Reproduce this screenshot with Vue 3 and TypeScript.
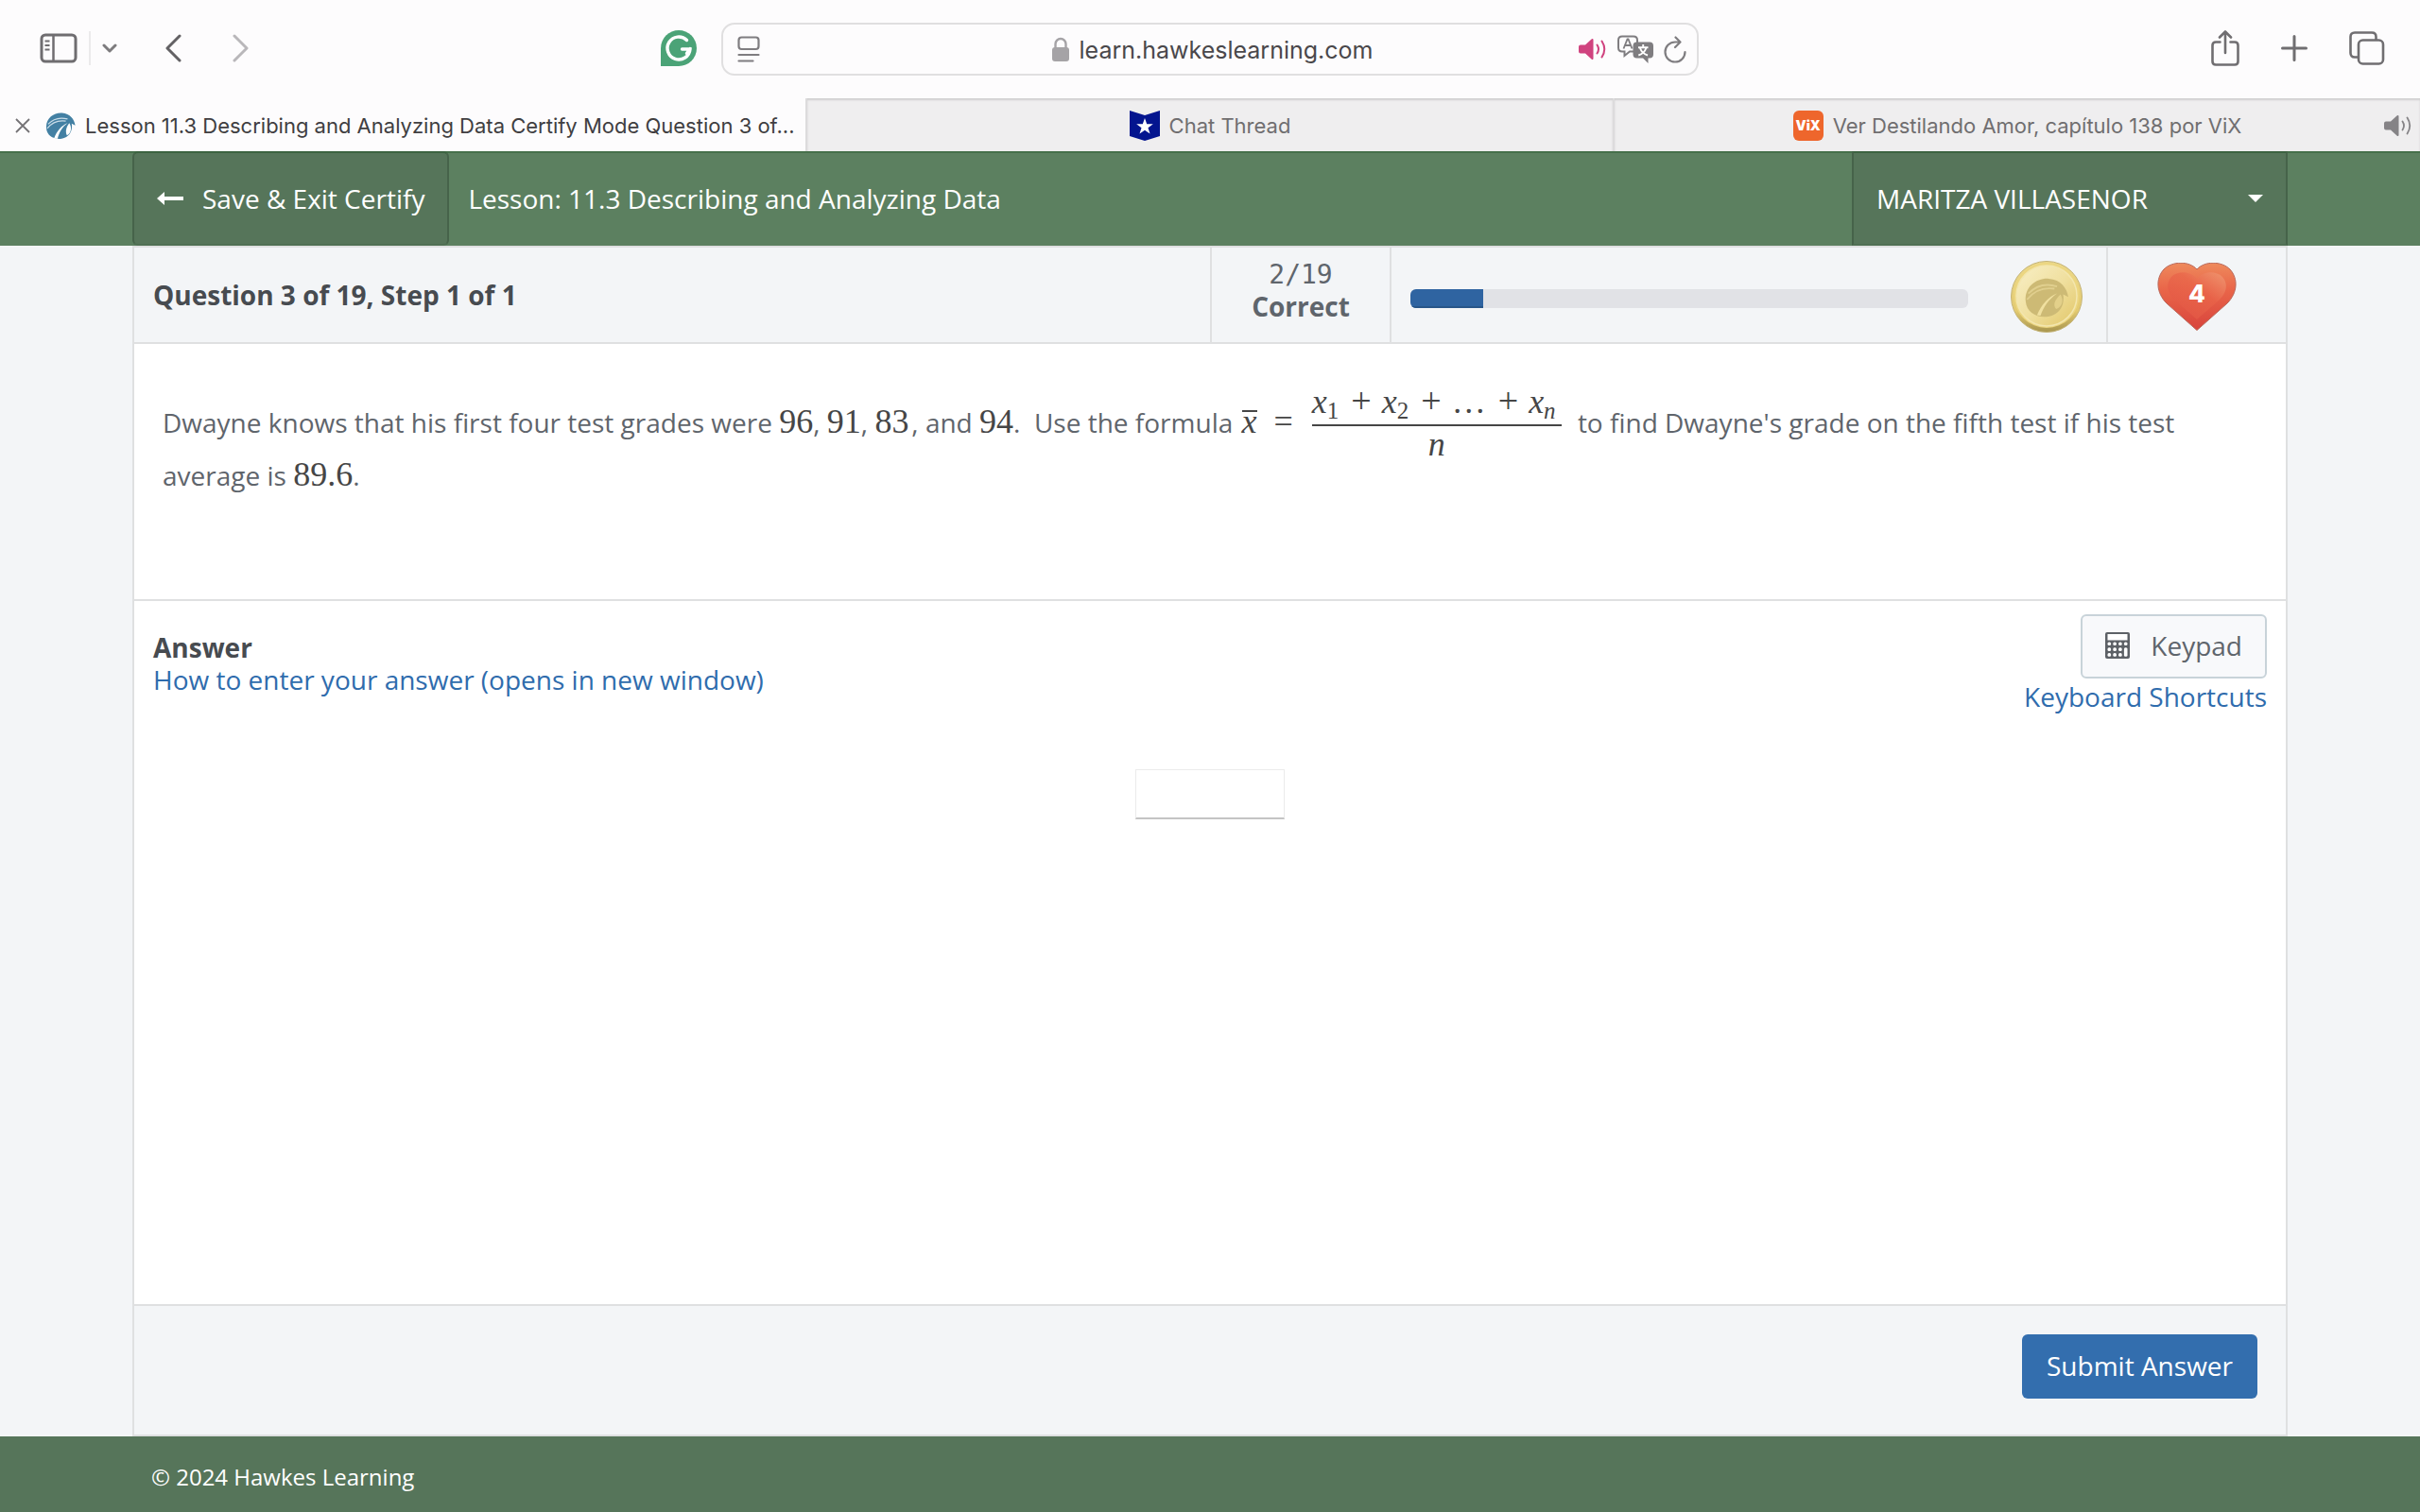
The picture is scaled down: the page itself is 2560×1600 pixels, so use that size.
<script setup lang="ts">
import { ref } from 'vue'

const address = ref('learn.hawkeslearning.com')
const answer = ref('')
const progress = ref(13)
const terms: string[] = ['1', '2']
</script>

<template>
  <div class="window">
    <header class="toolbar">
      <div class="tools tools-left">
        <button class="icon-btn" aria-label="Show sidebar">
          <svg width="40" height="32" viewBox="0 0 40 32" fill="none" stroke="#6f6d70" stroke-width="3">
            <rect x="2" y="2" width="36" height="28" rx="4" />
            <path d="M14.500 2v28" stroke-width="2.500" />
            <path d="M5.500 8.500h5M5.500 13h5M5.500 17.500h5" stroke-width="2" />
          </svg>
        </button>
        <span class="divider"></span>
        <button class="icon-btn menu" aria-label="Sidebar menu">
          <svg width="16" height="10" viewBox="0 0 16 10" fill="none" stroke="#7d7b7e" stroke-width="3" stroke-linecap="round" stroke-linejoin="round"><path d="M2 2l6 6 6-6" /></svg>
        </button>
        <button class="icon-btn back" aria-label="Back">
          <svg width="18" height="30" viewBox="0 0 18 30" fill="none" stroke="#636164" stroke-width="3" stroke-linecap="round" stroke-linejoin="round"><path d="M16 2L3 15l13 13" /></svg>
        </button>
        <button class="icon-btn" aria-label="Forward">
          <svg width="18" height="30" viewBox="0 0 18 30" fill="none" stroke="#b9b7ba" stroke-width="3" stroke-linecap="round" stroke-linejoin="round"><path d="M2 2l13 13L2 28" /></svg>
        </button>
        <button class="icon-btn grammar" aria-label="Grammar check">
          <svg width="38" height="38" viewBox="0 0 38 38">
            <path d="M19 0a19 19 0 0 1 0 38H0V19A19 19 0 0 1 19 0z" fill="#4ba377" />
            <path d="M27.500 10.500A12 12 0 1 0 31 20h-8.500M31 19.500l-3.500 5" fill="none" stroke="#fff" stroke-width="3.400" stroke-linecap="round" />
          </svg>
        </button>
      </div>

      <div class="url">
        <button class="icon-btn" aria-label="Page menu">
          <svg width="24" height="28" viewBox="0 0 24 28" fill="none" stroke="#7f7d80" stroke-width="2.200" stroke-linecap="round">
            <rect x="1.500" y="1.500" width="21" height="12.500" rx="3" /><path d="M1.500 20h21M1.500 26.500h15" />
          </svg>
        </button>
        <div class="address">
          <svg width="20" height="26" viewBox="0 0 20 26"><rect x="1" y="11" width="18" height="15" rx="3" fill="#a5a3a6" /><path d="M4.500 12V7.500a5.500 5.500 0 0 1 11 0V12" fill="none" stroke="#a5a3a6" stroke-width="2.400" /></svg>
          <input v-model="address" type="text" aria-label="Address" />
        </div>
        <div class="url-actions">
          <button class="icon-btn" aria-label="Mute">
            <svg width="30" height="24" viewBox="0 0 30 24"><path d="M2 7.500h5l6.500-6c1-1 2-.5 2 .8v19.400c0 1.300-1 1.800-2 .8L7 16.500H2q-2 0-2-2v-5q0-2 2-2z" fill="#d0437f" /><path d="M19.500 7.500q3 4.500 0 9M24.500 3.500q5.500 8.500 0 17" fill="none" stroke="#d0437f" stroke-width="2" stroke-linecap="round" /></svg>
          </button>
          <button class="icon-btn" aria-label="Translate">
            <svg width="38" height="30" viewBox="0 0 38 30">
              <path d="M17 17.500h-4L7.500 22v-4.500H5q-4 0-4-4v-8q0-4 4-4h12q4 0 4 4V8" fill="none" stroke="#7f7d80" stroke-width="2" />
              <path d="M6.500 14.500L10.500 4.500h1l4 10M8 11h6" fill="none" stroke="#7f7d80" stroke-width="1.800" />
              <path d="M20.500 7.500H34q4 0 4 4v9q0 4-4 4h-1.500V30L27 24.500h-6.500q-4 0-4-4v-9q0-4 4-4z" fill="#7f7d80" />
              <path d="M27.200 10v3M22 13.200h10.500M23.800 13.500q2 6 8.200 8M30.500 13.500q-2 6-8.200 8" fill="none" stroke="#fff" stroke-width="1.900" />
            </svg>
          </button>
          <button class="icon-btn" aria-label="Reload">
            <svg width="24" height="29" viewBox="0 0 24 29" fill="none" stroke="#7f7d80" stroke-width="2.200" stroke-linecap="round" stroke-linejoin="round"><path d="M22.500 17A10.500 10.500 0 1 1 12 6.500h5M12.500 1.500l5 5-5.500 5.500" /></svg>
          </button>
        </div>
      </div>

      <div class="tools tools-right">
        <button class="icon-btn" aria-label="Share">
          <svg width="30" height="38" viewBox="0 0 30 38" fill="none" stroke="#706e71" stroke-width="2.600" stroke-linecap="round" stroke-linejoin="round"><path d="M9.500 12.500H5q-3.500 0-3.500 3.500v17q0 3.500 3.500 3.500h20q3.500 0 3.500-3.500V16q0-3.500-3.500-3.500h-4.500M15 24V2M9 7.500L15 1.500l6 6" /></svg>
        </button>
        <button class="icon-btn" aria-label="New tab">
          <svg width="28" height="28" viewBox="0 0 28 28" stroke="#706e71" stroke-width="3" stroke-linecap="round"><path d="M14 1.500v25M1.500 14h25" /></svg>
        </button>
        <button class="icon-btn" aria-label="Tab overview">
          <svg width="38" height="36" viewBox="0 0 38 36" fill="none" stroke="#706e71" stroke-width="2.600"><rect x="10" y="9.500" width="26" height="25" rx="4.500" /><path d="M10 27.500H6q-4.500 0-4.500-4.500V6Q1.500 1.500 6 1.500h18Q28.500 1.500 28.500 6v3.500" /></svg>
        </button>
      </div>
    </header>

    <nav class="tabs" aria-label="Open tabs">
      <div class="tab active">
        <button class="icon-btn slot close" aria-label="Close tab">
          <svg width="16" height="16" viewBox="0 0 16 16" stroke="#757376" stroke-width="1.800"><path d="M1 1l14 14M15 1L1 15" /></svg>
        </button>
        <span class="tab-title">
          <svg width="32" height="28" viewBox="0 0 100 90">
            <path d="M2 55C-2 20 28 0 55 2c28 2 42 22 45 42l-12-6c4 22-6 46-34 51C28 93 4 80 2 55z" fill="#4380a3" />
            <path d="M8 40C26 20 50 16 74 22M5 54C22 32 46 26 68 29" fill="none" stroke="#c9dce8" stroke-width="4" />
            <path d="M74 36C54 44 38 62 28 88l12 1c6-22 14-38 34-53z" fill="#fff" />
            <path d="M80 36c-12 16-14 30-8 42 14-8 18-26 8-42z" fill="#fff" />
          </svg>
          <span>Lesson 11.3 Describing and Analyzing Data Certify Mode Question 3 of...</span>
        </span>
      </div>
      <div class="tab">
        <span class="tab-title">
          <svg width="32" height="32" viewBox="0 0 32 32"><path d="M0 0l16 5L32 0v27l-16 5-16-5z" fill="#04158f" /><path d="M16 8l2.200 6.200h6.600l-5.300 4 2 6.300L16 20.700l-5.500 3.800 2-6.300-5.300-4h6.600z" fill="#fff" /></svg>
          <span>Chat Thread</span>
        </span>
      </div>
      <div class="tab">
        <span class="slot"></span>
        <span class="tab-title">
          <span class="vix">ViX</span>
          <span>Ver Destilando Amor, capítulo 138 por ViX</span>
        </span>
        <button class="icon-btn slot" aria-label="Mute tab">
          <svg width="30" height="24" viewBox="0 0 30 24"><path d="M2 7.500h5l6.500-6c1-1 2-.5 2 .8v19.400c0 1.300-1 1.800-2 .8L7 16.500H2q-2 0-2-2v-5q0-2 2-2z" fill="#858386" /><path d="M19.500 7.500q3 4.500 0 9M24.500 3.500q5.500 8.500 0 17" fill="none" stroke="#858386" stroke-width="1.800" stroke-linecap="round" /></svg>
        </button>
      </div>
    </nav>

    <div class="banner">
      <div class="banner-inner">
        <button class="save">
          <svg width="28" height="14" viewBox="0 0 28 14" fill="#fff"><path d="M8 0v5h20v4H8v5L0 7z" /></svg>
          Save &amp; Exit Certify
        </button>
        <h1>Lesson: 11.3 Describing and Analyzing Data</h1>
        <button class="user">
          MARITZA VILLASENOR
          <svg width="16" height="8" viewBox="0 0 16 8" fill="#fff"><path d="M0 0h16L8 8z" /></svg>
        </button>
      </div>
    </div>

    <main class="card">
      <section class="status">
        <h2>Question 3 of 19, Step 1 of 1</h2>
        <div class="score"><span class="count">2/19</span><strong>Correct</strong></div>
        <div class="meter">
          <div class="track"><div class="fill" :style="{ width: progress + '%' }"></div></div>
          <svg width="76" height="76" viewBox="0 0 76 76">
            <defs>
              <linearGradient id="rim" x1="0" y1="0" x2="0" y2="1"><stop offset="0" stop-color="#ecd98c" /><stop offset=".7" stop-color="#e3ca70" /><stop offset="1" stop-color="#a8954e" /></linearGradient>
              <linearGradient id="face" x1="0" y1="0" x2="1" y2="1"><stop offset="0" stop-color="#f8efc6" /><stop offset=".5" stop-color="#f0e0a0" /><stop offset="1" stop-color="#e2c768" /></linearGradient>
            </defs>
            <circle cx="38" cy="38" r="37.500" fill="url(#rim)" stroke="#c4b376" />
            <circle cx="38" cy="36.500" r="34.500" fill="#ecd680" />
            <circle cx="38" cy="37" r="32" fill="url(#face)" stroke="#f3e6ae" stroke-width="1.500" />
            <g transform="translate(15 18) scale(.46)">
              <path d="M2 55C-2 20 28 0 55 2c28 2 42 22 45 42l-12-6c4 22-6 46-34 51C28 93 4 80 2 55z" fill="#cdba75" />
              <path d="M8 36C26 18 50 12 74 20M5 50C22 28 46 22 68 25" fill="none" stroke="#e0cf8e" stroke-width="4" />
              <path d="M74 36C54 44 38 62 28 86l8 1c8-22 18-36 38-51z" fill="#f0e0a0" />
              <path d="M82 38c-14 14-18 24-10 34 14-6 18-20 10-34z" fill="#e3d08a" />
            </g>
          </svg>
        </div>
        <div class="lives">
          <svg width="84" height="72" viewBox="0 0 84 72">
            <defs>
              <linearGradient id="heart" x1="0" y1="0" x2="0" y2="1"><stop offset="0" stop-color="#ee8a5c" /><stop offset=".4" stop-color="#e96549" /><stop offset="1" stop-color="#d8443c" /></linearGradient>
              <linearGradient id="shine" x1="0" y1="1" x2="1" y2="0"><stop offset="0" stop-color="#e25545" /><stop offset=".6" stop-color="#e96449" /><stop offset="1" stop-color="#f0a07a" /></linearGradient>
            </defs>
            <path d="M42 71.500L10 43C-1 32-2 17 7 7c9-9 27-9 35 0 8-9 26-9 35 0 9 10 8 25-3 36z" fill="url(#heart)" stroke="#b96a5c" />
            <path d="M42 60L18 39c-8-8-9-17-3-24 7-7 21-6 27 2 6-8 20-9 27-2 6 7 5 16-3 24z" fill="url(#shine)" opacity=".7" />
          </svg>
          <strong>4</strong>
        </div>
      </section>

      <section class="question">
        <p>Dwayne knows that his first four test grades were <span class="num">96</span>,&hairsp;&thinsp;<span class="num">91</span>,&hairsp;&thinsp;<span class="num">83</span>&hairsp;, and <span class="num">94</span>.&nbsp; Use the formula <span class="math"><i class="mean">x</i><span class="eq">=</span><span class="frac"><span class="numer"><template v-for="sub in terms" :key="sub"><i>x</i><span class="sub">{{ sub }}</span><span class="op">+</span></template><span>…</span><span class="op">+</span><i>x</i><i class="sub">n</i></span><span class="denom"><i>n</i></span></span></span> to find Dwayne's grade on the fifth test if his test <span>average is <span class="num">89.6</span>.</span></p>
      </section>

      <section class="answer">
        <div class="answer-head">
          <div class="answer-title">
            <label for="answer">Answer</label>
            <a href="#">How to enter your answer (opens in new window)</a>
          </div>
          <div class="answer-tools">
            <button class="keypad">
              <svg width="26" height="28" viewBox="0 0 26 28"><rect width="26" height="28" rx="2" fill="#5d6166" /><g fill="#fff"><rect x="2.500" y="2" width="21" height="6.500" /><rect x="2.500" y="10.500" width="3.600" height="3.600" rx="1.500" /><rect x="8.300" y="10.500" width="3.600" height="3.600" rx="1.500" /><rect x="14.100" y="10.500" width="3.600" height="3.600" rx="1.500" /><rect x="19.900" y="10.500" width="3.600" height="3.600" rx="1.500" /><rect x="2.500" y="16.300" width="3.600" height="3.600" rx="1.500" /><rect x="8.300" y="16.300" width="3.600" height="3.600" rx="1.500" /><rect x="14.100" y="16.300" width="3.600" height="3.600" rx="1.500" /><rect x="2.500" y="22.100" width="3.600" height="3.600" rx="1.500" /><rect x="8.300" y="22.100" width="3.600" height="3.600" rx="1.500" /><rect x="14.100" y="22.100" width="3.600" height="3.600" rx="1.500" /><rect x="19.900" y="16.300" width="3.600" height="9.400" rx="1.500" /></g></svg>
              Keypad
            </button>
            <a href="#">Keyboard Shortcuts</a>
          </div>
        </div>
        <input id="answer" v-model="answer" class="answer-box" type="text" />
      </section>

      <section class="submit-row">
        <button class="submit">Submit Answer</button>
      </section>
    </main>

    <footer class="foot"><span>© 2024 Hawkes Learning</span></footer>
  </div>
</template>

<style>
body {
  margin: 0;
}
</style>

<style scoped>
* {
  box-sizing: border-box;
}
.window {
  min-height: 100vh;
  display: flex;
  flex-direction: column;
  background: #f3f5f7;
  color: #5f656c;
  font: 28px/34px 'Open Sans', 'Noto Sans', sans-serif;
}
button {
  font: inherit;
  color: inherit;
  margin: 0;
  cursor: pointer;
}
svg {
  display: block;
  flex: none;
}
.icon-btn {
  display: flex;
  align-items: center;
  justify-content: center;
  border: 0;
  padding: 0;
  background: none;
}
h1,
h2,
p {
  margin: 0;
  font-size: inherit;
}
a {
  color: #2f6cad;
  text-decoration: none;
}

/* Browser toolbar */
.toolbar {
  display: grid;
  grid-template-columns: 1fr minmax(0, 1034px) 1fr;
  align-items: center;
  height: 104px;
  background: #fdfcfd;
  font-family: Inter, 'Liberation Sans', sans-serif;
}
.tools {
  display: flex;
  align-items: center;
  padding-bottom: 2px;
}
.tools-left {
  padding-left: 42px;
  padding-right: 26px;
}
.divider {
  width: 2px;
  height: 36px;
  margin: 0 12px;
  background: #ebeaeb;
}
.back {
  margin: 0 54px 0 50px;
}
.grammar {
  margin-left: auto;
}
.tools-right {
  justify-content: flex-end;
  gap: 44px;
  padding-right: 37px;
}
.url {
  display: grid;
  grid-template-columns: 1fr auto 1fr;
  align-items: center;
  justify-items: start;
  height: 56px;
  padding: 0 11px 0 15px;
  border: 2px solid #e0dfe0;
  border-radius: 14px;
}
.address {
  display: flex;
  align-items: center;
  gap: 10px;
}
.address input {
  field-sizing: content;
  border: 0;
  padding: 2px 0 0;
  background: none;
  color: #4a484b;
  font: 25px/34px Inter, 'Liberation Sans', sans-serif;
}
.url-actions {
  justify-self: end;
  display: flex;
  align-items: center;
  gap: 11px;
}

/* Tab strip */
.tabs {
  display: flex;
  height: 56px;
  background: #efeeef;
  color: #706e70;
  font: 22px/28px Inter, 'Liberation Sans', sans-serif;
}
.tab {
  flex: 1 1 0;
  min-width: 0;
  display: flex;
  align-items: center;
  padding-top: 2px;
  border-left: 2px solid #dcdbdc;
  box-shadow: inset 0 2px 2px #d0cfd0;
}
.tab.active {
  background: #fdfcfd;
  color: #403e41;
  border-left: 0;
  box-shadow: none;
}
.tab-title {
  flex: 1;
  min-width: 0;
  display: flex;
  align-items: center;
  justify-content: center;
  gap: 10px;
  white-space: nowrap;
}
.active .tab-title {
  justify-content: flex-start;
}
.slot {
  width: 38px;
  flex: none;
  justify-content: flex-start;
}
.slot.close {
  width: 48px;
  padding-left: 16px;
}
.vix {
  width: 32px;
  height: 32px;
  border-radius: 6px;
  background: #ee662c;
  color: #fff;
  font-size: 14px;
  line-height: 32px;
  font-weight: 900;
  text-align: center;
}

/* Lesson banner */
.banner {
  padding: 0 140px;
  background: #5c8060;
  box-shadow: inset 0 2px 0 #46704b;
  color: #fff;
}
.banner-inner {
  display: flex;
  align-items: stretch;
  height: 100px;
}
.save,
.user {
  display: flex;
  align-items: center;
  border: 2px solid #46634a;
  border-top-color: #3c6341;
  border-bottom-color: #507054;
  background: #56755a;
}
.save {
  gap: 20px;
  padding: 0 24px;
  border-radius: 6px;
}
.banner h1 {
  flex: 1;
  align-self: center;
  padding-left: 20px;
  font-weight: 400;
}
.user {
  justify-content: space-between;
  width: 461px;
  padding: 0 24px;
}

/* Question card */
.card {
  flex: 1;
  display: flex;
  flex-direction: column;
  margin: 0 140px;
  border: 2px solid #dfe0e1;
  background: #fff;
}
.status {
  display: flex;
  height: 102px;
  border-bottom: 2px solid #dfe0e1;
  background: #f3f5f7;
}
.status h2 {
  flex: 1;
  align-self: center;
  padding-left: 20px;
  color: #474b50;
  font-weight: 700;
}
.score {
  display: flex;
  flex-direction: column;
  align-items: center;
  width: 190px;
  padding-top: 12px;
  border-left: 2px solid #dfe0e1;
}
.score strong {
  line-height: 32px;
}
.count {
  font-family: 'DejaVu Sans Mono', monospace;
}
.meter {
  display: flex;
  align-items: center;
  justify-content: space-between;
  width: 758px;
  padding: 4px 25px 0 20px;
  border-left: 2px solid #dfe0e1;
}
.track {
  width: 590px;
  height: 20px;
  margin-top: 4px;
  border-radius: 6px;
  overflow: hidden;
  background: #e1e2e6;
}
.fill {
  height: 100%;
  background: #2f64a1;
  box-shadow: inset 0 -2px 0 #285689;
}
.lives {
  display: grid;
  place-items: center;
  width: 190px;
  padding-top: 3px;
  border-left: 2px solid #dfe0e1;
}
.lives > * {
  grid-area: 1 / 1;
}
.lives strong {
  padding-bottom: 6px;
  color: #fff;
  font: 800 26px/34px Inter, 'Liberation Sans', sans-serif;
}

.question {
  min-height: 272px;
  padding: 51px 30px 0;
  border-bottom: 2px solid #dfe0e1;
}
.num,
.math {
  color: #464646;
  font-family: 'Liberation Serif', serif;
  font-size: 36px;
}
.math {
  padding-left: 2px;
  white-space: nowrap;
}
.mean {
  display: inline-block;
  line-height: 20px;
  border-top: 2px solid #464646;
}
.eq {
  margin: 0 20px 0 18px;
}
.frac {
  display: inline-flex;
  flex-direction: column;
  align-items: center;
  margin-right: 10px;
  vertical-align: middle;
}
.numer {
  display: flex;
  align-items: baseline;
  height: 36px;
  padding-right: 6px;
  border-bottom: 2px solid #464646;
  line-height: 18px;
}
.denom {
  height: 34px;
  line-height: 38px;
}
.sub {
  position: relative;
  top: 6px;
  font-size: 25px;
}
.op {
  margin: 0 11px 0 13px;
  font-size: 38px;
}

.answer {
  flex: 1;
  display: flex;
  flex-direction: column;
  align-items: center;
  padding: 14px 20px;
}
.answer-head {
  align-self: stretch;
  display: flex;
  justify-content: space-between;
}
.answer-title,
.answer-tools {
  display: flex;
  flex-direction: column;
}
.answer-title {
  padding-top: 18px;
}
.answer-title label {
  color: #474b50;
  font-weight: 700;
}
.answer-tools {
  align-items: flex-end;
  gap: 2px;
}
.keypad {
  display: flex;
  align-items: center;
  gap: 22px;
  height: 68px;
  padding: 0 24px 2px;
  border: 2px solid #c8d3d9;
  border-radius: 6px;
  background: #f8f9fb;
}
.answer-box {
  width: 158px;
  height: 53px;
  margin-top: 60px;
  border: 1px solid #ebebeb;
  border-bottom: 2px solid #c4c4c4;
  padding: 0 8px;
  background: #fff;
  font: inherit;
}
.submit-row {
  display: flex;
  justify-content: flex-end;
  padding: 30px 30px 38px;
  border-top: 2px solid #dfe0e1;
  background: #f3f5f7;
}
.submit {
  height: 68px;
  padding: 0 26px 2px;
  border: 0;
  border-radius: 6px;
  background: #336eae;
  color: #fff;
}

.foot {
  display: flex;
  align-items: center;
  height: 80px;
  padding: 6px 160px 0;
  background: #56755a;
  color: #fff;
  font-size: 24px;
}
</style>
